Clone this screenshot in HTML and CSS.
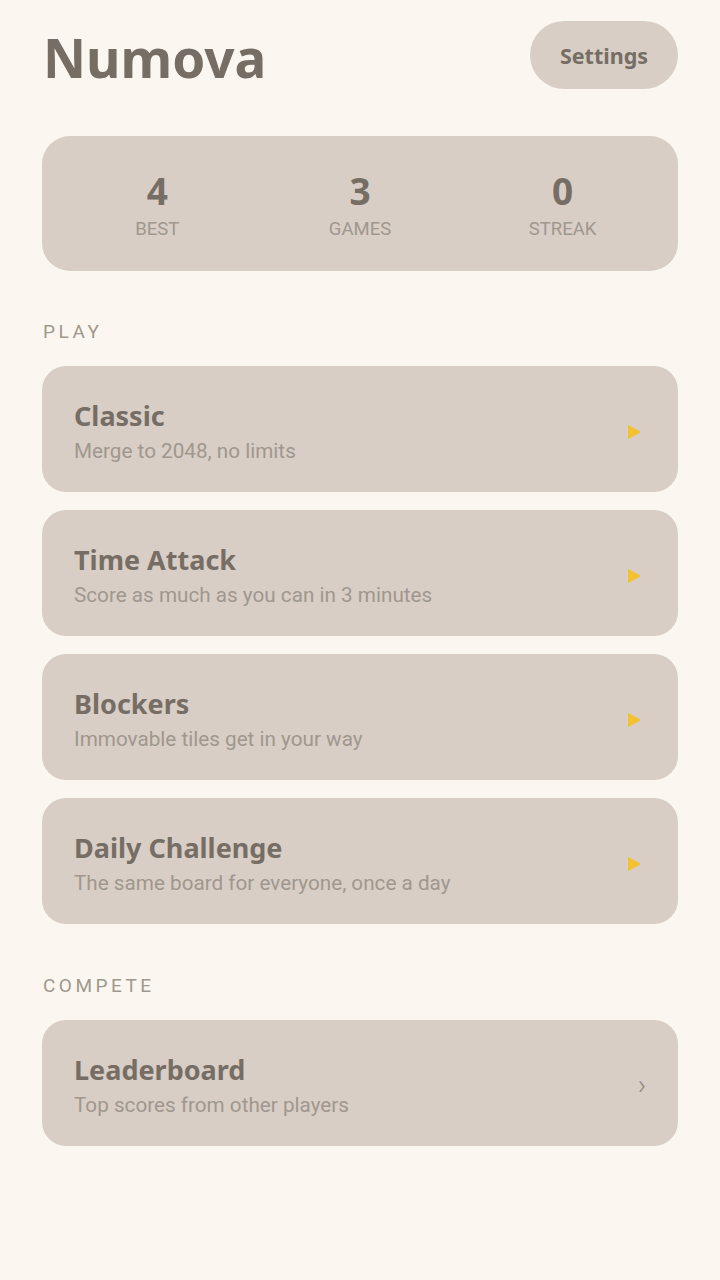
FILE: index.html
```html
<!DOCTYPE html>
<html lang="en">
<head>
    <meta charset="UTF-8">
    <meta name="viewport" content="width=device-width, initial-scale=1.0">
    <title>Numova</title>
    <link rel="stylesheet" href="styles.css">
</head>
<body>
    <div class="app">
        <header class="top-bar">
            <h1 class="logo">Numova</h1>
            <button class="settings-btn">Settings</button>
        </header>

        <section class="stats">
            <div class="stat">
                <div class="stat-value">4</div>
                <div class="stat-label">BEST</div>
            </div>
            <div class="stat">
                <div class="stat-value">3</div>
                <div class="stat-label">GAMES</div>
            </div>
            <div class="stat">
                <div class="stat-value">0</div>
                <div class="stat-label">STREAK</div>
            </div>
        </section>

        <h2 class="section-title">PLAY</h2>
        <div class="menu">
            <div class="menu-item">
                <div class="menu-text">
                    <div class="menu-name">Classic</div>
                    <div class="menu-desc">Merge to 2048, no limits</div>
                </div>
                <span class="play-icon"></span>
            </div>
            <div class="menu-item">
                <div class="menu-text">
                    <div class="menu-name">Time Attack</div>
                    <div class="menu-desc">Score as much as you can in 3 minutes</div>
                </div>
                <span class="play-icon"></span>
            </div>
            <div class="menu-item">
                <div class="menu-text">
                    <div class="menu-name">Blockers</div>
                    <div class="menu-desc">Immovable tiles get in your way</div>
                </div>
                <span class="play-icon"></span>
            </div>
            <div class="menu-item">
                <div class="menu-text">
                    <div class="menu-name">Daily Challenge</div>
                    <div class="menu-desc">The same board for everyone, once a day</div>
                </div>
                <span class="play-icon"></span>
            </div>
        </div>

        <h2 class="section-title compete">COMPETE</h2>
        <div class="menu">
            <div class="menu-item">
                <div class="menu-text">
                    <div class="menu-name">Leaderboard</div>
                    <div class="menu-desc">Top scores from other players</div>
                </div>
                <span class="chevron">›</span>
            </div>
        </div>
    </div>
</body>
</html>
```

FILE: styles.css
```css
/* Global */
* {
    margin: 0;
    padding: 0;
    box-sizing: border-box;
}

body {
    background: #fbf7f0;
    font-family: 'Roboto', sans-serif;
    color: #766d65;
}

.app {
    padding: 21px 42px 40px;
}

/* Header */
.top-bar {
    display: flex;
    justify-content: space-between;
    align-items: center;
    height: 68px;
}

.logo {
    font-family: 'Noto Sans', sans-serif;
    font-size: 53px;
    font-weight: 700;
    color: #766d65;
    margin-left: 1px;
    margin-top: 4px;
}

.settings-btn {
    width: 148px;
    height: 68px;
    border: none;
    border-radius: 34px;
    background: #d8cec5;
    color: #766d65;
    font-family: 'Noto Sans', sans-serif;
    font-size: 21.5px;
    font-weight: 700;
    cursor: pointer;
}

/* Stats */
.stats {
    margin-top: 47px;
    height: 135px;
    background: #d8cec5;
    border-radius: 28px;
    display: grid;
    grid-template-columns: repeat(3, 1fr);
    padding: 0 14px;
    align-items: center;
}

.stat {
    text-align: center;
    margin-top: 2px;
}

.stat-value {
    font-family: 'Noto Sans', sans-serif;
    font-size: 37px;
    font-weight: 700;
    line-height: 1.2;
    color: #766d65;
}

.stat-label {
    font-size: 18.5px;
    color: #a0978e;
    margin-top: 5px;
}

/* Sections */
.section-title {
    font-size: 19px;
    font-weight: 400;
    letter-spacing: 3.5px;
    color: #a0978e;
    margin: 49px 0 23px 1px;
}

.section-title.compete {
    margin-top: 50px;
}

.menu {
    display: flex;
    flex-direction: column;
    gap: 18px;
}

.menu-item {
    height: 126px;
    background: #d8cec5;
    border-radius: 24px;
    padding: 0 32px;
    display: flex;
    align-items: center;
    justify-content: space-between;
}

.menu-text {
    margin-top: 6px;
}

.menu-name {
    font-family: 'Noto Sans', sans-serif;
    font-size: 27px;
    font-weight: 700;
    line-height: 1.25;
    color: #766d65;
}

.menu-desc {
    font-size: 20.7px;
    line-height: 1.3;
    color: #a0978e;
    margin-top: 5px;
}

.play-icon {
    width: 0;
    height: 0;
    border-top: 7px solid transparent;
    border-bottom: 7px solid transparent;
    border-left: 13px solid #f2c12e;
    margin: 6px 5px 0 0;
}

.chevron {
    font-size: 28px;
    font-weight: 300;
    color: #8f867d;
    margin: 3px 0 0 0;
}
```
